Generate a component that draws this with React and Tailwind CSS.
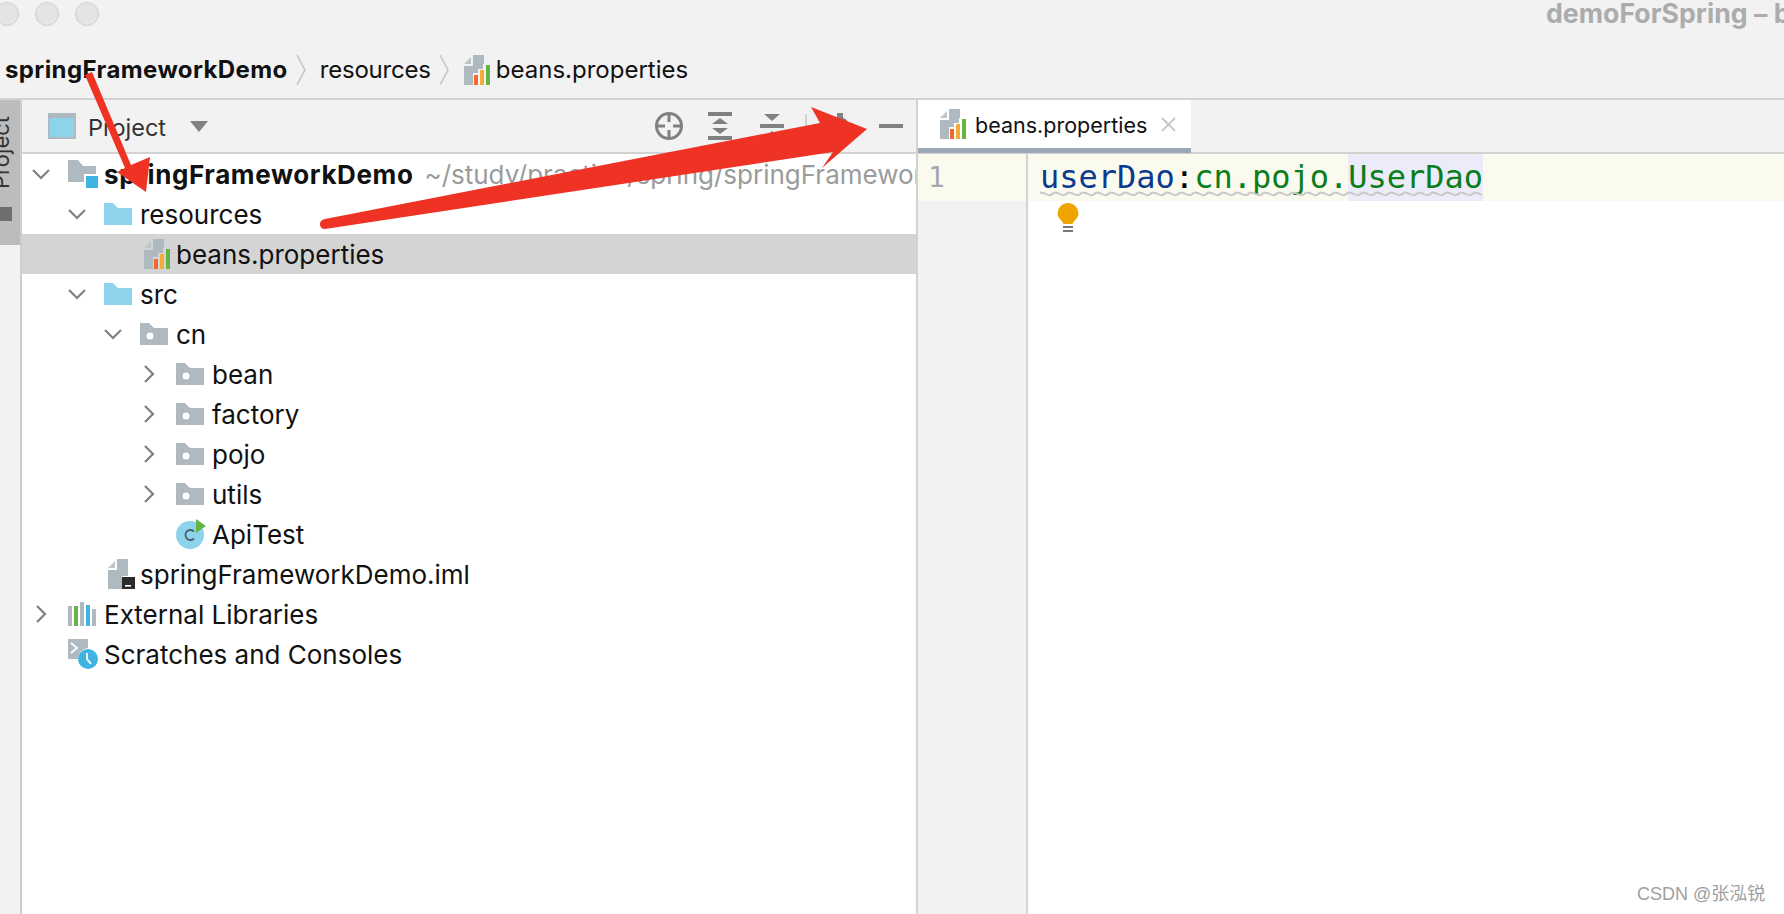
import React from "react";

const Chevron = ({ dir }) => (
  <svg width="18" height="18" viewBox="0 0 18 18" fill="none" stroke="#808080" strokeWidth="2.2">
    {dir === "down" ? <polyline points="1,5 9,13 17,5" /> : <polyline points="5,1 13,9 5,17" />}
  </svg>
);

const PropsIcon = ({ className = "" }) => (
  <svg className={className} width="26" height="30" viewBox="0 0 26 30">
    <polygon points="0,9 7,2 7,9" fill="#bcc5ca" />
    <path d="M9 0H20V9H19V14H14V18H9V30H0V11H9Z" fill="#aeb9c0" />
    <rect x="10" y="20" width="4" height="10" fill="#ee6a2e" />
    <rect x="16" y="15" width="4" height="15" fill="#f5ab3a" />
    <rect x="22" y="10" width="4" height="20" fill="#62b543" />
  </svg>
);

const Folder = ({ fill = "#8ed3ec", dot }) => (
  <svg width="28" height="22" viewBox="0 0 28 22">
    <path d="M0 22V0H9L14 5H28V22Z" fill={fill} />
    {dot && <circle cx="10" cy="13" r="3.5" fill="#fff" />}
  </svg>
);

const ModuleIcon = () => (
  <svg width="31" height="29" viewBox="0 0 31 29">
    <path d="M0 22V0H10L15 6H28V22Z" fill="#aeb9c0" />
    <rect x="16" y="14" width="15" height="15" fill="#fff" />
    <rect x="18" y="16" width="12" height="12" fill="#3fb4e3" />
  </svg>
);

const ClassIcon = () => (
  <svg width="31" height="30" viewBox="0 0 31 30">
    <circle cx="14" cy="16" r="14" fill="#8ed3ec" />
    <path d="M18 12.5A5 5 0 1 0 18 19.5" fill="none" stroke="#4a5a63" strokeWidth="1.8" />
    <polygon points="20,0 30,7 20,14" fill="#62b543" />
  </svg>
);

const ImlIcon = () => (
  <svg className="ml-[4px]" width="27" height="30" viewBox="0 0 27 30">
    <polygon points="0,9 7,2 7,9" fill="#bcc5ca" />
    <path d="M9 0H20V17H14V30H0V11H9Z" fill="#aeb9c0" />
    <rect x="14" y="18" width="13" height="12" fill="#2b2b2b" />
    <rect x="17" y="26" width="6" height="1.6" fill="#fff" />
  </svg>
);

const LibIcon = () => (
  <svg width="28" height="24" viewBox="0 0 28 24">
    <rect x="0" y="4" width="4" height="20" fill="#aeb9c0" />
    <rect x="6" y="4" width="4" height="20" fill="#62b543" />
    <rect x="12" y="0" width="4" height="24" fill="#aeb9c0" />
    <rect x="18" y="3" width="4" height="21" fill="#3fb4e3" />
    <rect x="24" y="7" width="4" height="17" fill="#aeb9c0" />
  </svg>
);

const ScratchIcon = () => (
  <svg width="31" height="30" viewBox="0 0 31 30">
    <path d="M0 0H20V9A11 11 0 0 0 10 20H0Z" fill="#aeb9c0" />
    <polyline points="3,4 9,9 3,14" fill="none" stroke="#fff" strokeWidth="1.8" />
    <circle cx="20" cy="20" r="10" fill="#3fb4e3" />
    <polyline points="19,14 19,20 23,25" fill="none" stroke="#fff" strokeWidth="2" />
  </svg>
);

const Sep = () => (
  <svg width="11" height="30" viewBox="0 0 11 30" fill="none" stroke="#c9c9c9" strokeWidth="1.6">
    <polyline points="1,0 9,15 1,30" />
  </svg>
);

const rows = [
  { pad: "pl-[44px]", chev: "down", icon: <Folder />, label: "resources" },
  { pad: "pl-[80px]", icon: <PropsIcon className="ml-[4px]" />, label: "beans.properties", selected: true },
  { pad: "pl-[44px]", chev: "down", icon: <Folder />, label: "src" },
  { pad: "pl-[80px]", chev: "down", icon: <Folder fill="#aeb9c0" dot />, label: "cn" },
  { pad: "pl-[116px]", chev: "right", icon: <Folder fill="#aeb9c0" dot />, label: "bean" },
  { pad: "pl-[116px]", chev: "right", icon: <Folder fill="#aeb9c0" dot />, label: "factory" },
  { pad: "pl-[116px]", chev: "right", icon: <Folder fill="#aeb9c0" dot />, label: "pojo" },
  { pad: "pl-[116px]", chev: "right", icon: <Folder fill="#aeb9c0" dot />, label: "utils" },
  { pad: "pl-[116px]", icon: <ClassIcon />, label: "ApiTest" },
  { pad: "pl-[44px]", icon: <ImlIcon />, label: "springFrameworkDemo.iml" },
  { pad: "pl-[8px]", chev: "right", icon: <LibIcon />, label: "External Libraries" },
  { pad: "pl-[8px]", icon: <ScratchIcon />, label: "Scratches and Consoles" },
];

const Row = ({ pad, chev, icon, label, selected, children }) => (
  <div className={`flex h-10 items-center whitespace-nowrap text-[26px] ${pad} ${selected ? "bg-[#d4d4d4]" : ""}`}>
    <div className="flex w-[38px] shrink-0 items-center pl-[2px]">{chev && <Chevron dir={chev} />}</div>
    <div className="flex w-[36px] shrink-0 items-center">{icon}</div>
    {children || <span className="pt-[1px]">{label}</span>}
  </div>
);

export default function App() {
  return (
    <div className="relative flex h-[914px] w-[1784px] flex-col overflow-hidden bg-[#f2f2f2] font-['Inter',sans-serif] text-[24px] leading-none text-[#111]">
      {/* Title bar */}
      <div className="flex h-10 shrink-0 items-start whitespace-nowrap pt-[2px]">
        <div className="ml-[-5px] flex gap-4">
          <div className="h-6 w-6 rounded-full border border-[#cfcfcf] bg-[#e4e4e4]" />
          <div className="h-6 w-6 rounded-full border border-[#cfcfcf] bg-[#e4e4e4]" />
          <div className="h-6 w-6 rounded-full border border-[#cfcfcf] bg-[#e4e4e4]" />
        </div>
        <div className="ml-[1447px] text-[26.7px] font-bold leading-[22px] text-[#acacac]">demoForSpring – beans.properties</div>
      </div>

      {/* Breadcrumb */}
      <div className="flex h-[60px] shrink-0 items-center border-b-2 border-[#d2d2d2] pl-[5px] pt-[2px]">
        <span className="font-bold tracking-[0.4px]">springFrameworkDemo</span>
        <div className="ml-[8px] mr-[13px] flex"><Sep /></div>
        <span className="tracking-[-0.2px]">resources</span>
        <div className="ml-[8px] mr-[14px] flex"><Sep /></div>
        <PropsIcon />
        <span className="ml-[6px]">beans.properties</span>
      </div>

      {/* Body */}
      <div className="flex min-h-0 flex-1">
        {/* Tool stripe */}
        <div className="flex w-[22px] shrink-0 flex-col border-r-2 border-[#cdcdcd]">
          <div className="flex h-[145px] flex-col items-end overflow-hidden bg-[#bcbcbc] pr-[8px] pt-[16px]">
            <span className="rotate-180 text-[22px] text-[#333] [writing-mode:vertical-rl]">Project</span>
            <div className="mt-[18px] h-[14px] w-[16px] shrink-0 bg-[#6e6e6e]" />
          </div>
        </div>

        {/* Project panel */}
        <div className="flex w-[895px] shrink-0 flex-col overflow-hidden">
          <div className="flex h-[54px] shrink-0 items-center border-b-2 border-[#d2d2d2]">
            <div className="ml-[26px] flex h-[26px] w-7 items-center justify-center border-2 border-t-[5px] border-[#aeb9c0] bg-[#8ed3ec]" />
            <span className="ml-[12px] pt-[3px] text-[23.5px] text-[#333]">Project</span>
            <svg className="ml-[24px]" width="18" height="11" viewBox="0 0 18 11"><polygon points="0,0 18,0 9,11" fill="#808080" /></svg>
            <svg className="ml-[447px]" width="28" height="28" viewBox="0 0 28 28" fill="none" stroke="#808080" strokeWidth="3">
              <circle cx="14" cy="14" r="12.5" />
              <path d="M14 1V10M14 18V27M1 14H10M18 14H27" />
            </svg>
            <svg className="ml-[25px]" width="24" height="28" viewBox="0 0 24 28" fill="#808080">
              <rect width="24" height="4" />
              <rect y="24" width="24" height="4" />
              <polygon points="12,6 20,12 4,12" />
              <polygon points="12,22 20,16 4,16" />
            </svg>
            <svg className="ml-[28px]" width="24" height="28" viewBox="0 0 24 28" fill="#808080">
              <rect y="12" width="24" height="4" />
              <polygon points="12,9 20,2 4,2" />
              <polygon points="12,19 20,26 4,26" />
            </svg>
            <div className="ml-[21px] h-[24px] w-[2px] bg-[#d2d2d2]" />
            <svg className="ml-[20px]" width="26" height="26" viewBox="0 0 26 26" fill="#808080">
              <circle cx="13" cy="13" r="9" />
              <path d="M10 0H16V6H10ZM10 20H16V26H10ZM0 10H6V16H0ZM20 10H26V16H20Z" />
              <circle cx="13" cy="13" r="3.5" fill="#f2f2f2" />
            </svg>
            <div className="ml-[26px] h-1 w-6 bg-[#808080]" />
          </div>
          <div className="flex-1 bg-white">
            <Row pad="pl-[8px]" chev="down" icon={<ModuleIcon />}>
              <span className="pt-[1px] font-bold tracking-[0.6px]">springFrameworkDemo</span>
              <span className="ml-[11px] pt-[1px] text-[#9b9b9b]">~/study/practice/spring/springFrameworkDemo</span>
            </Row>
            {rows.map((r) => <Row key={r.label} {...r} />)}
          </div>
        </div>

        {/* Editor */}
        <div className="flex min-w-0 flex-1 flex-col border-l-[2px] border-[#d2d2d2] -ml-[1px]">
          <div className="flex h-[54px] shrink-0 border-b-2 border-[#d2d2d2]">
            <div className="flex h-[53px] w-[273px] items-center border-b-[5px] border-[#9ca7b8] bg-white pl-[22px]">
              <PropsIcon />
              <span className="ml-[9px] pt-[3px] text-[21.5px]">beans.properties</span>
              <svg className="ml-[14px]" width="15" height="15" viewBox="0 0 15 15" stroke="#c4c8cc" strokeWidth="1.8"><path d="M1 1L14 14M14 1L1 14" /></svg>
            </div>
          </div>
          <div className="flex flex-1">
            <div className="w-[110px] shrink-0 border-r-2 border-[#d4d4d4]">
              <div className="flex h-[47px] items-center bg-[#fbfaef] pl-[10px] font-['DejaVu_Sans_Mono',monospace] text-[28px] text-[#a9a9a9]">1</div>
            </div>
            <div className="flex-1 bg-white">
              <div className="flex h-[47px] bg-[#fbfaef] pl-[12px] font-['DejaVu_Sans_Mono',monospace] text-[32px]">
                <div className="relative flex">
                  <span className="pt-[7px] text-[#0b3a8f]">userDao</span>
                  <span className="pt-[7px] text-black">:</span>
                  <span className="pt-[7px] text-[#0a7d1c]">cn.pojo.</span>
                  <span className="bg-[#ecebf9] pt-[7px] text-[#0a7d1c]">UserDao</span>
                  <svg className="absolute bottom-[3px] left-0" width="442" height="7">
                    <defs>
                      <pattern id="squiggle" width="14" height="7" patternUnits="userSpaceOnUse">
                        <path d="M0 1.5Q3.5 1.5 7 3.5T14 1.5" fill="none" stroke="#c8c8c8" strokeWidth="2" />
                      </pattern>
                    </defs>
                    <rect width="442" height="7" fill="url(#squiggle)" />
                  </svg>
                </div>
              </div>
              <svg className="ml-[29px] mt-[2px]" width="22" height="30" viewBox="0 0 22 30">
                <path d="M11 0A10.5 10.5 0 0 1 21.5 10.5C21.5 15 17 17 15.5 21H6.5C5 17 .5 15 .5 10.5A10.5 10.5 0 0 1 11 0Z" fill="#f0a400" />
                <rect x="6" y="23" width="10" height="2" fill="#777" />
                <rect x="6" y="27" width="10" height="2" fill="#777" />
              </svg>
            </div>
          </div>
        </div>
      </div>

      {/* Annotation arrows drawn over the screenshot */}
      <svg className="pointer-events-none absolute left-0 top-0" width="1784" height="914" viewBox="0 0 1784 914">
        <polygon points="85,75 92,72 131,165 150,157 146,192 117,172 125,168" fill="#ee3224" />
        <path d="M820 123L811 107L867 129L822 168L833 152L325 229Q320 229 320 224Q320 220 325 219Z" fill="#ee3224" />
      </svg>

      {/* Watermark */}
      <div className="absolute left-[1637px] top-[884px] font-['Liberation_Sans','Noto_Sans_CJK_SC',sans-serif] text-[18px] leading-5 text-[#a0a0a0]">CSDN @张泓锐</div>
    </div>
  );
}
